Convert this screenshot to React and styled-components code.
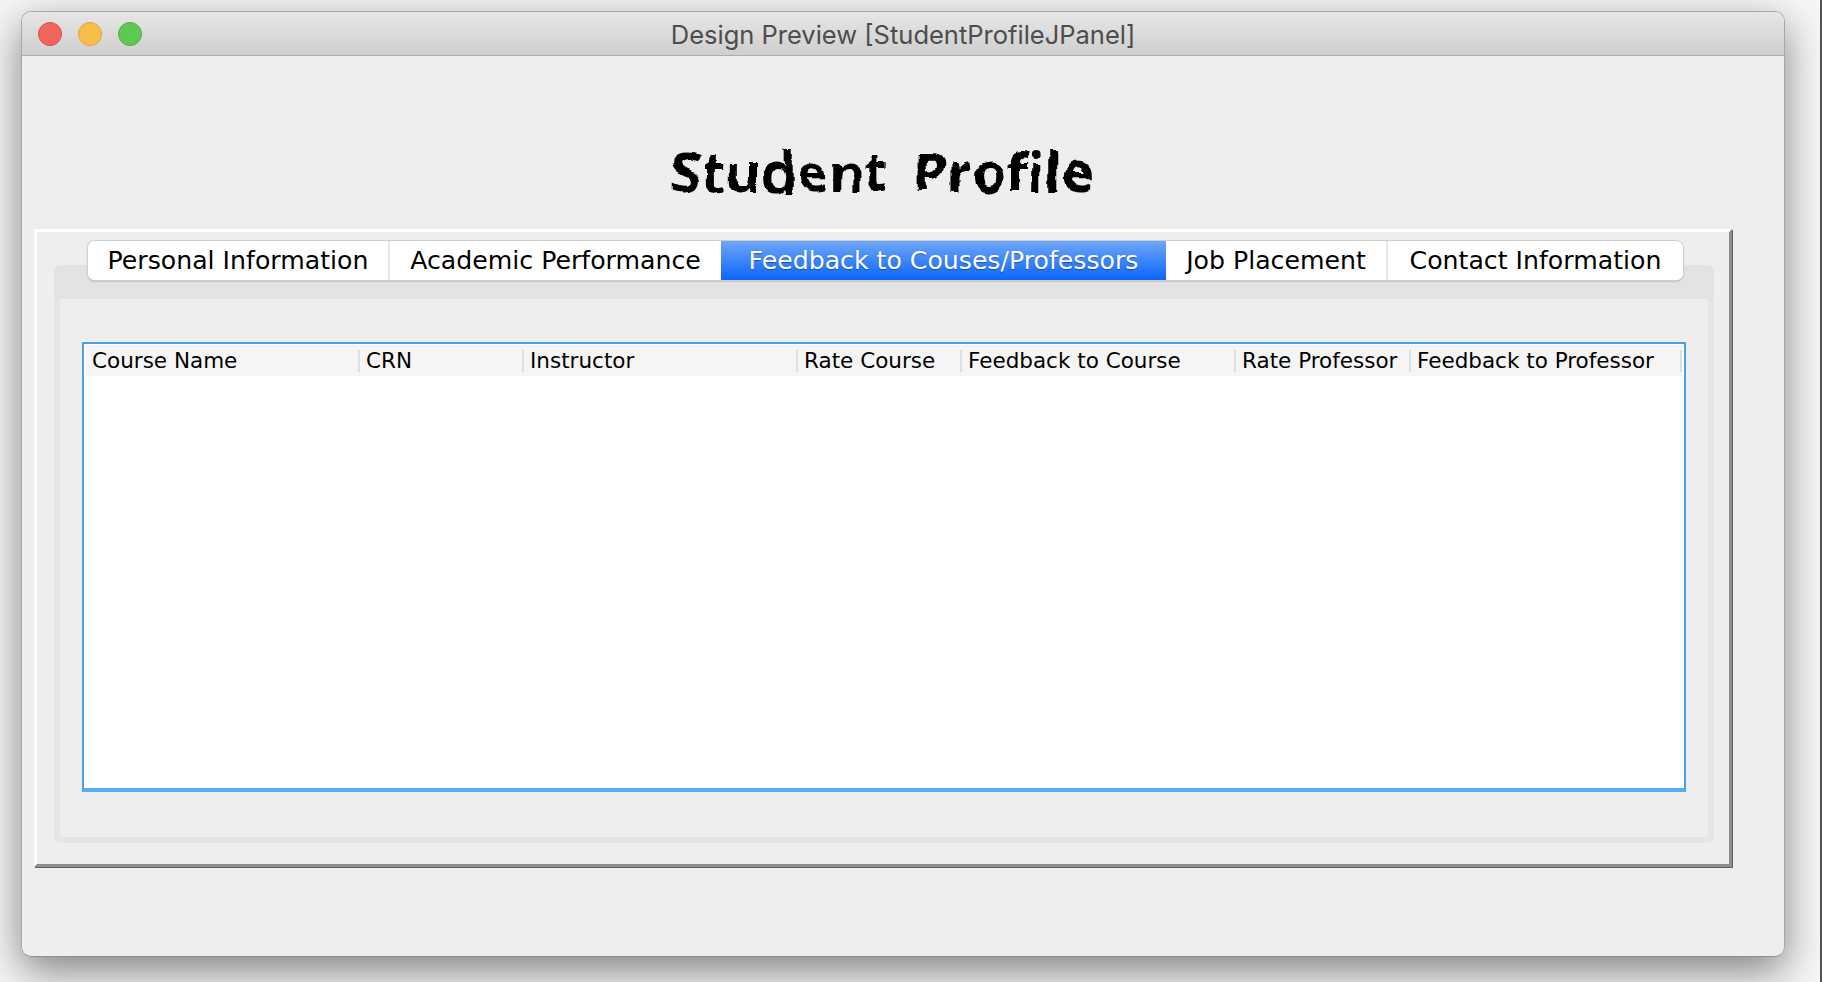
import React from 'react';
import styled, { createGlobalStyle } from 'styled-components';

const tabs = [
  { label: 'Personal Information', width: 300 },
  { label: 'Academic Performance', width: 333, divider: true },
  { label: 'Feedback to Couses/Professors', width: 445, active: true },
  { label: 'Job Placement', width: 220 },
  { label: 'Contact Information', width: 297, divider: true }
];

const columns = [
  { label: 'Course Name', width: 274 },
  { label: 'CRN', width: 164 },
  { label: 'Instructor', width: 274 },
  { label: 'Rate Course', width: 164 },
  { label: 'Feedback to Course', width: 274 },
  { label: 'Rate Professor', width: 175 },
  { label: 'Feedback to Professor', width: 271 }
];

const GlobalStyle = createGlobalStyle`
  html, body {
    margin: 0;
    height: 100%;
    overflow: hidden;
    background: #f4f4f4;
    font-family: "DejaVu Sans", "Liberation Sans", sans-serif;
  }
`;

const Screen = styled.div`
  width: 1822px;
  height: 982px;
  box-sizing: border-box;
  padding: 11px 0 0 21px;
  background: #f6f6f6;
  border-right: 2px solid #555;
`;

const WindowFrame = styled.div`
  width: 1764px;
  border-radius: 10px;
  box-shadow: 0 14px 42px rgba(0, 0, 0, 0.48);
`;

const Window = styled.div`
  height: 946px;
  box-sizing: border-box;
  display: flex;
  flex-direction: column;
  background: #eeeeee;
  border: 1px solid #a8a8a8;
  border-bottom-color: #8e8e8e;
  border-radius: 10px;
  overflow: hidden;
`;

const TitleBar = styled.div`
  height: 43px;
  flex: none;
  display: flex;
  align-items: center;
  padding-left: 16px;
  background: linear-gradient(#e6e6e6, #cfcfcf);
  border-bottom: 1px solid #adadad;
`;

const Light = styled.span`
  width: 24px;
  height: 24px;
  flex: none;
  box-sizing: border-box;
  margin-right: 16px;
  border-radius: 50%;
  background: ${props => props.color};
  border: 1px solid ${props => props.edge};
`;

const TitleText = styled.div`
  flex: 1;
  margin-left: -136px;
  padding-top: 2px;
  text-align: center;
  font-family: Inter, "Liberation Sans", sans-serif;
  font-size: 25.5px;
  color: #4d4d4d;
`;

const Content = styled.div`
  flex: 1;
  padding-left: 12px;
`;

const PageTitle = styled.h1`
  margin: 0;
  height: 173px;
  box-sizing: border-box;
  padding-top: 81px;
  width: 1698px;
  text-align: center;
  font-family: "Open Sans", "Liberation Sans", sans-serif;
  font-weight: 700;
  font-size: 54px;
  line-height: 68px;
  letter-spacing: 0.6px;
  word-spacing: 9px;
  color: #000;
  filter: url(#rough);
`;

const Panel = styled.div`
  width: 1698px;
  height: 638px;
  box-sizing: border-box;
  padding: 33px 15px 21px 17px;
  background: #eeeeee;
  border-top: 3px solid #fff;
  border-left: 3px solid #fff;
  border-right: 3px solid #8f8f8f;
  border-bottom: 3px solid #8f8f8f;
  box-shadow: 1px 1px 0 #606060;
`;

const TabPane = styled.div`
  height: 578px;
  box-sizing: border-box;
  background: #eeeeee;
  border-radius: 7px;
  box-shadow: inset 0 34px 0 #e3e3e3, inset 0 0 0 6px #e5e5e5;
`;

const TabBar = styled.div`
  display: flex;
  width: 1595px;
  height: 39px;
  margin-left: 34px;
  position: relative;
  top: -24px;
  background: #fff;
  border-radius: 7px;
  box-shadow: 0 0 0 1px #cfcfcf, 0 1px 2px rgba(0, 0, 0, 0.45);
  overflow: hidden;
`;

const Tab = styled.div`
  width: ${props => props.width}px;
  flex: none;
  box-sizing: border-box;
  display: flex;
  align-items: center;
  justify-content: center;
  font-size: 25.2px;
  white-space: nowrap;
  color: ${props => (props.active ? '#fff' : '#000')};
  background: ${props => (props.active ? 'linear-gradient(#6ea6f8, #0a66fa)' : '#fff')};
  text-shadow: ${props => (props.active ? '0 1px 1px rgba(0,0,0,.35)' : 'none')};
  border-left: ${props => (props.divider ? '2px solid #e6e6e6' : 'none')};
`;

const Table = styled.div`
  width: 1604px;
  height: 450px;
  margin: 38px 0 0 28px;
  box-sizing: border-box;
  padding: 1px 2px 0;
  background: #fff;
  border: 2px solid #4d9fe3;
  border-bottom-width: 4px;
  border-bottom-color: #5aaef0;
`;

const HeaderRow = styled.div`
  display: flex;
  height: 31px;
  background: #f5f5f5;
`;

const HeaderCell = styled.div`
  width: ${props => props.width}px;
  flex: none;
  box-sizing: border-box;
  padding-left: 6px;
  display: flex;
  align-items: center;
  font-size: 21.5px;
  color: #000;
  white-space: nowrap;
  background: linear-gradient(#dedede, #dedede) right center / 2px 22px no-repeat;
`;

export default function App() {
  return (
    <Screen>
      <GlobalStyle />
      <svg width="0" height="0" style={{ position: 'absolute' }}>
        <filter id="rough" x="-5%" y="-20%" width="110%" height="140%">
          <feTurbulence type="fractalNoise" baseFrequency="0.035" numOctaves="4" seed="7" />
          <feDisplacementMap in="SourceGraphic" scale="9" xChannelSelector="R" yChannelSelector="G" />
        </filter>
      </svg>
      <WindowFrame>
        <Window>
          <TitleBar>
            <Light color="#f0655c" edge="#df4c44" />
            <Light color="#f8bd4c" edge="#e4a431" />
            <Light color="#5fc754" edge="#4fb045" />
            <TitleText>Design Preview [StudentProfileJPanel]</TitleText>
          </TitleBar>
          <Content>
            <PageTitle>Student Profile</PageTitle>
            <Panel>
              <TabPane>
                <TabBar>
                  {tabs.map(tab => (
                    <Tab key={tab.label} width={tab.width} active={tab.active} divider={tab.divider}>
                      {tab.label}
                    </Tab>
                  ))}
                </TabBar>
                <Table>
                  <HeaderRow>
                    {columns.map(col => (
                      <HeaderCell key={col.label} width={col.width}>
                        {col.label}
                      </HeaderCell>
                    ))}
                  </HeaderRow>
                </Table>
              </TabPane>
            </Panel>
          </Content>
        </Window>
      </WindowFrame>
    </Screen>
  );
}
